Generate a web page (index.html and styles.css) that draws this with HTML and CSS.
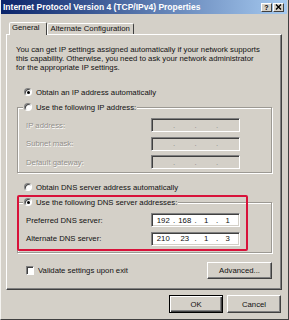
FILE: index.html
```html
<!DOCTYPE html>
<html lang="en">

<head>
  <meta charset="UTF-8">
  <title>Internet Protocol Version 4 (TCP/IPv4) Properties</title>
  <link rel="stylesheet" href="styles.css">
</head>

<body>

  <div class="window">
    <div class="titlebar">
      <span class="title">Internet Protocol Version 4 (TCP/IPv4) Properties</span>
      <div class="caption-buttons">
        <span class="cap-btn">?</span>
        <span class="cap-btn">
          <svg width="7" height="6" viewBox="0 0 7 6"><path d="M1 0.5 L6 5.5 M6 0.5 L1 5.5" stroke="#000" stroke-width="1.4" fill="none"/></svg>
        </span>
      </div>
    </div>

    <div class="tabs">
      <div class="tab active">General</div>
      <div class="tab">Alternate Configuration</div>
    </div>

    <div class="panel">
      <p class="intro">You can get IP settings assigned automatically if your network supports<br>this capability. Otherwise, you need to ask your network administrator<br>for the appropriate IP settings.</p>

      <div class="option first"><span class="radio checked"></span>Obtain an IP address automatically</div>

      <fieldset class="group">
        <legend><div class="option"><span class="radio"></span>Use the following IP address:</div></legend>
        <div class="field-row disabled">
          <span>IP address:</span>
          <div class="ip"><span class="oct"></span><span class="dot">.</span><span class="oct"></span><span class="dot">.</span><span class="oct"></span><span class="dot">.</span><span class="oct"></span></div>
        </div>
        <div class="field-row disabled">
          <span>Subnet mask:</span>
          <div class="ip"><span class="oct"></span><span class="dot">.</span><span class="oct"></span><span class="dot">.</span><span class="oct"></span><span class="dot">.</span><span class="oct"></span></div>
        </div>
        <div class="field-row disabled">
          <span>Default gateway:</span>
          <div class="ip"><span class="oct"></span><span class="dot">.</span><span class="oct"></span><span class="dot">.</span><span class="oct"></span><span class="dot">.</span><span class="oct"></span></div>
        </div>
      </fieldset>

      <div class="option dns-auto"><span class="radio"></span>Obtain DNS server address automatically</div>

      <fieldset class="group dns">
        <legend><div class="option"><span class="radio checked"></span>Use the following DNS server addresses:</div></legend>
        <div class="field-row">
          <span>Preferred DNS server:</span>
          <div class="ip enabled"><span class="oct">192</span><span class="dot">.</span><span class="oct">168</span><span class="dot">.</span><span class="oct">1</span><span class="dot">.</span><span class="oct">1</span></div>
        </div>
        <div class="field-row">
          <span>Alternate DNS server:</span>
          <div class="ip enabled"><span class="oct">210</span><span class="dot">.</span><span class="oct">23</span><span class="dot">.</span><span class="oct">1</span><span class="dot">.</span><span class="oct">3</span></div>
        </div>
      </fieldset>

      <div class="footer-row">
        <div class="check"><span class="box"></span>Validate settings upon exit</div>
        <button type="button" class="btn advanced">Advanced...</button>
      </div>

      <div class="highlight"></div>
    </div>

    <div class="actions">
      <button type="button" class="btn default">OK</button>
      <button type="button" class="btn">Cancel</button>
    </div>
  </div>

</body>

</html>
```

FILE: styles.css
```css
* {
  box-sizing: border-box;
}

body {
  margin: 0;
  background: #d4d0c8;
  font-family: 'Liberation Sans', Arial, sans-serif;
  font-size: 7.75px;
  color: #111;
}

.window {
  width: 289px;
  height: 320px;
  background: #d4d0c8;
  border: 1px solid;
  border-top: 0;
  border-color: #d4d0c8 #404040 #404040 #f4f3f0;
  padding: 0 1px 1px 0;
  display: flex;
  flex-direction: column;
}

.titlebar {
  height: 14px;
  background: linear-gradient(to right, #0a246a, #a6caf0);
  display: flex;
  align-items: center;
  justify-content: space-between;
  padding: 0 3px 0 2px;
}

.title {
  color: #fff;
  font-weight: bold;
  font-size: 8.5px;
}

.caption-buttons {
  display: flex;
  gap: 1px;
}

.cap-btn {
  width: 11px;
  height: 9px;
  background: #d4d0c8;
  border: 1px solid;
  border-color: #fff #404040 #404040 #fff;
  display: flex;
  align-items: center;
  justify-content: center;
  font-weight: bold;
  font-size: 7px;
  line-height: 1;
  color: #000;
}

.tabs {
  height: 20px;
  display: flex;
  align-items: flex-end;
  padding-left: 8px;
}

.tab {
  height: 11px;
  padding: 0 3px;
  border: 1px solid;
  border-bottom: 0;
  border-color: #fff #404040 transparent #fff;
  border-radius: 2px 2px 0 0;
  line-height: 10px;
  background: #d4d0c8;
}

.tab.active {
  height: 13px;
  margin-bottom: -1px;
  padding: 0 6px 0 2px;
  position: relative;
  z-index: 1;
}

.panel {
  position: relative;
  margin-left: 5px;
  width: 276px;
  height: 256px;
  border: 1px solid;
  border-color: #fff #404040 #404040 #fff;
  box-shadow: inset -1px -1px 0 #808080;
}

.intro {
  margin: 0;
  padding: 10px 0 0 9px;
  line-height: 9px;
  white-space: nowrap;
}

.option {
  display: flex;
  align-items: center;
  height: 10px;
  white-space: nowrap;
}

.option.first {
  margin-top: 15px;
  padding-left: 17px;
}

.option.dns-auto {
  margin-top: 9px;
  padding-left: 17px;
}

.radio {
  width: 8px;
  height: 8px;
  border-radius: 50%;
  background: #fff;
  border: 1px solid;
  border-color: #808080 #fff #fff #808080;
  box-shadow: inset 1px 1px 0 #404040;
  margin-right: 4px;
  display: flex;
  align-items: center;
  justify-content: center;
}

.radio.checked::after {
  content: "";
  width: 3px;
  height: 3px;
  border-radius: 50%;
  background: #000;
}

.group {
  margin: 5px 0 0 10px;
  width: 255px;
  padding: 6px 5px 3px 5px;
  border: 1px solid #9c9993;
  box-shadow: inset 1px 1px 0 #fff, 1px 1px 0 #fff;
  min-width: 0;
}

.group legend {
  padding: 0 1px;
  background: #d4d0c8;
}

.group.dns {
  padding-bottom: 6px;
}

.field-row {
  display: grid;
  grid-template-columns: 125px 89px;
  align-items: center;
  height: 14px;
  padding-left: 3px;
  margin-bottom: 4.5px;
}

.field-row:last-child {
  margin-bottom: 0;
}

.field-row.disabled span {
  color: #928f8a;
  text-shadow: 0.6px 0.6px 0 #fff;
}

.ip {
  height: 14px;
  border: 1px solid;
  border-color: #808080 #fff #fff #808080;
  box-shadow: inset 1px 1px 0 #404040, inset -1px -1px 0 #d4d0c8;
  display: flex;
  align-items: center;
  padding: 0 2px;
  background: #d4d0c8;
}

.ip.enabled {
  background: #fff;
}

.oct {
  flex: 1;
  text-align: center;
}

.dot {
  width: 3px;
  text-align: center;
}

.field-row.disabled .dot {
  color: #8e8c88;
  text-shadow: none;
}

.footer-row {
  display: flex;
  align-items: center;
  justify-content: space-between;
  margin: 9px 9px 0 19px;
  height: 17px;
}

.check {
  display: flex;
  align-items: center;
}

.box {
  width: 8px;
  height: 9px;
  background: #fff;
  border: 1px solid;
  border-color: #808080 #fff #fff #808080;
  box-shadow: inset 1px 1px 0 #404040;
  margin-right: 4px;
}

.btn {
  font: inherit;
  color: #111;
  background: #d4d0c8;
  border: 1px solid;
  border-color: #fff #404040 #404040 #fff;
  box-shadow: inset -1px -1px 0 #808080;
  padding: 0;
}

.btn.advanced {
  width: 65px;
  height: 17px;
}

.actions {
  display: flex;
  justify-content: flex-end;
  gap: 4px;
  margin-top: 5px;
  padding-right: 6px;
}

.actions .btn {
  width: 54px;
  height: 18px;
}

.btn.default {
  border-color: #000;
  box-shadow: inset 1px 1px 0 #fff, inset -1px -1px 0 #404040, inset -2px -2px 0 #808080;
}

.highlight {
  position: absolute;
  left: 10px;
  top: 160px;
  width: 231px;
  height: 56px;
  border: 2px solid #d8123a;
  border-radius: 2px;
}
```
